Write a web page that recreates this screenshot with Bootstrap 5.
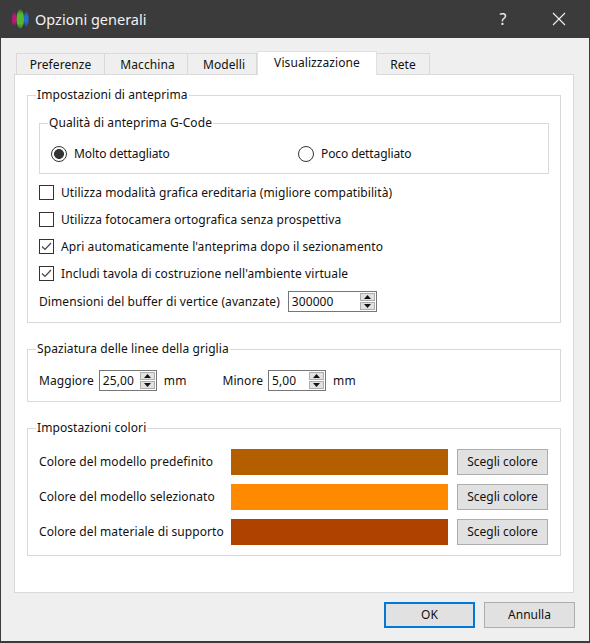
<!DOCTYPE html>
<html lang="it">
<head>
<meta charset="utf-8">
<title>Opzioni generali</title>
<link rel="stylesheet" href="https://cdn.jsdelivr.net/npm/bootstrap@5.3.0/dist/css/bootstrap.min.css">
<style>
html,body{height:100%}
body{background:#efefef;color:#111;font:12px/16px "Noto Sans","Open Sans",sans-serif;letter-spacing:.08px;overflow:hidden}
.shell{width:590px;height:643px;border:1px solid #3b3b3b;border-bottom-width:2px;background:#efefef}
.titlebar{height:37px;background:#3b3b3b;color:#f2f2f2;flex:none;padding:0 7px 2px 10px}
.titlebar .ttl{font-size:14.5px;margin-left:5px;letter-spacing:0}
.tbtn{width:46px;display:flex;align-items:center;justify-content:center}
.tbtn-q{font-size:16px;margin-right:10px}
.tabs-wrap{padding:13px 16px 0 13px;flex:1}
.nav-tabs.wintabs{border:0;padding-left:2px;height:23px;align-items:flex-end;flex-wrap:nowrap;margin:0;position:relative;z-index:2}
.wintabs .nav-link{font-size:12px;color:#111;background:#efefef;border:1px solid #d9d9d9;border-bottom:0;border-left-width:0;border-radius:0;height:21px;padding:3px 0 0;text-align:center;margin:0}
.wintabs .nav-item:first-child .nav-link{border-left-width:1px}
.wintabs .nav-link.active{background:#fff;border-left-width:1px;color:#111;padding-top:3px;margin-bottom:-1px;height:24px}
.tw1{width:89px}.tw2{width:83px}.tw3{width:69px}.tw4{width:120px}.tw5{width:53px}
.tw2 .nav-link{padding-left:3px!important}
.tw3 .nav-link{padding-left:4px!important}
.wintabs .nav-item.tw5 .nav-link{border-left-width:0}
.panel{background:#fff;border:1px solid #d9d9d9;width:560px;height:519px;padding:12px 12px 0}
fieldset.gb{border:1px solid #d9d9d9;padding:0 11px;margin:0}
fieldset.gb>legend{float:none;width:auto;font-size:12px;line-height:16px;margin:0 0 0 -3px;padding:0 1px;color:#111}
.gb1{height:236px}
.gb2{height:61px;margin-top:18px!important}
.gb3{height:136px;margin-top:18px!important}
.gb-in{height:59px;margin-top:12px!important}
.radio-grid{display:grid;grid-template-columns:1fr 1fr;column-gap:8px;padding-top:15px}
.rb{width:16px;height:16px;border:1px solid #333;border-radius:50%;background:#fff;margin:0;flex:none;appearance:none;position:static}
.rb:checked{background:radial-gradient(circle,#333 0 4.6px,#fff 5.3px)}
.rtext{margin-left:7px;letter-spacing:-.1px}
.cks{margin-top:5px}
.ckrow{height:27px;display:flex;align-items:center;padding-left:0;margin:0}
.ckrow .form-check-input{width:15px;height:15px;margin:0 7px 0 0;float:none;border:1px solid #333;border-radius:0;background-color:#fff;box-shadow:none;flex:none}
.ckrow .form-check-input:checked{background-color:#fff;border-color:#333;background-size:15px 15px;background-image:url("data:image/svg+xml,%3Csvg xmlns='http://www.w3.org/2000/svg' viewBox='0 0 15 15'%3E%3Cpath d='M3 7.5l3 3 6-6.500' fill='none' stroke='%23444' stroke-width='1.200'/%3E%3C/svg%3E")}
.ckrow .form-check-label{color:#111}
.spinrow{height:21px;margin-top:4px}
.spin{height:21px;border:1px solid #767676;background:#fff;display:flex;align-items:center;justify-content:space-between;padding:0 1px 0 3px;flex:none;font-size:12px}
.sw89{width:89px;margin-left:8px}
.sw58{width:58px;margin-left:5px}
.arrows{width:15px;height:17px;display:flex;flex-direction:column;gap:1px;flex:none}
.arrows span{flex:1;background:#e1e1e1;border:1px solid #adadad;display:flex;align-items:center;justify-content:center}
.mmlbl{margin-left:7px}
.grid2{height:21px;margin-top:13px}
.gap-mm{width:36px;flex:none}
.colorrow{height:26px;margin-bottom:9px}
.colorlbl{width:192px;flex:none}
.swatch{width:217px;height:26px;flex:none}
.c1{background:#b35f00}.c2{background:#ff8a00}.c3{background:#b04200}
.wbtn{height:26px;background:#e1e1e1;border:1px solid #adadad;border-radius:0;color:#111;font-size:12px;line-height:16px;padding:0;width:91px;flex:none}
.wbtn:hover{background:#e1e1e1;border-color:#adadad;color:#111}
.ml9{margin-left:9px}
.okb{border:2px solid #0078d7}
.okb:hover{border-color:#0078d7}
.foot{height:26px;margin-top:9px;width:561px}
.colors-pad{padding-top:13px}
</style>
</head>
<body>
<div class="shell d-flex flex-column">
  <div class="titlebar d-flex align-items-center">
    <svg width="19" height="20" viewBox="0 0 19 20" aria-hidden="true">
      <defs>
        <linearGradient id="gm" x1="0" x2="0" y1="0" y2="1"><stop offset="0" stop-color="#5a2a4c"/><stop offset=".3" stop-color="#c0147c"/><stop offset=".7" stop-color="#c0147c"/><stop offset="1" stop-color="#5a2a4c"/></linearGradient>
        <linearGradient id="gg" x1="0" x2="0" y1="0" y2="1"><stop offset="0" stop-color="#3e6b3a"/><stop offset=".25" stop-color="#55b52c"/><stop offset=".75" stop-color="#55b52c"/><stop offset="1" stop-color="#3e6b3a"/></linearGradient>
        <linearGradient id="gb" x1="0" x2="0" y1="0" y2="1"><stop offset="0" stop-color="#2f4a6e"/><stop offset=".3" stop-color="#1e6fd0"/><stop offset=".7" stop-color="#1e6fd0"/><stop offset="1" stop-color="#2f4a6e"/></linearGradient>
      </defs>
      <ellipse cx="3.300" cy="10" rx="2.300" ry="7.500" fill="url(#gm)"/>
      <ellipse cx="15.300" cy="10" rx="2.300" ry="7.500" fill="url(#gb)"/>
      <ellipse cx="9.300" cy="10" rx="3.700" ry="9.500" fill="url(#gg)"/>
    </svg>
    <span class="ttl">Opzioni generali</span>
    <span class="tbtn tbtn-q ms-auto">?</span>
    <span class="tbtn">
      <svg width="14" height="14" viewBox="0 0 14 14" aria-hidden="true"><path d="M1 1l12 12M13 1L1 13" stroke="#f2f2f2" stroke-width="1.100" fill="none"/></svg>
    </span>
  </div>
  <div class="tabs-wrap">
    <ul class="nav nav-tabs wintabs">
      <li class="nav-item tw1"><a class="nav-link" href="#">Preferenze</a></li>
      <li class="nav-item tw2"><a class="nav-link" href="#">Macchina</a></li>
      <li class="nav-item tw3"><a class="nav-link" href="#">Modelli</a></li>
      <li class="nav-item tw4"><a class="nav-link active" href="#">Visualizzazione</a></li>
      <li class="nav-item tw5"><a class="nav-link" href="#">Rete</a></li>
    </ul>
    <div class="panel">
      <fieldset class="gb gb1">
        <legend>Impostazioni di anteprima</legend>
        <fieldset class="gb gb-in">
          <legend class="leg2">Qualità di anteprima G-Code</legend>
          <div class="radio-grid">
            <label class="d-flex align-items-center"><input class="rb" type="radio" name="q" checked><span class="rtext">Molto dettagliato</span></label>
            <label class="d-flex align-items-center"><input class="rb" type="radio" name="q"><span class="rtext">Poco dettagliato</span></label>
          </div>
        </fieldset>
        <div class="cks">
          <div class="form-check ckrow"><input class="form-check-input" type="checkbox" id="c1"><label class="form-check-label" for="c1">Utilizza modalità grafica ereditaria (migliore compatibilità)</label></div>
          <div class="form-check ckrow"><input class="form-check-input" type="checkbox" id="c2"><label class="form-check-label" for="c2">Utilizza fotocamera ortografica senza prospettiva</label></div>
          <div class="form-check ckrow"><input class="form-check-input" type="checkbox" id="c3" checked><label class="form-check-label" for="c3">Apri automaticamente l'anteprima dopo il sezionamento</label></div>
          <div class="form-check ckrow"><input class="form-check-input" type="checkbox" id="c4" checked><label class="form-check-label" for="c4">Includi tavola di costruzione nell'ambiente virtuale</label></div>
        </div>
        <div class="d-flex align-items-center spinrow">
          <span>Dimensioni del buffer di vertice (avanzate)</span>
          <div class="spin sw89"><span>300000</span><div class="arrows"><span><svg width="7" height="4"><path d="M3.500 0L7 4H0z" fill="#111"/></svg></span><span><svg width="7" height="4"><path d="M0 0h7L3.500 4z" fill="#111"/></svg></span></div></div>
        </div>
      </fieldset>
      <fieldset class="gb gb2">
        <legend>Spaziatura delle linee della griglia</legend>
        <div class="d-flex align-items-center grid2">
          <span>Maggiore</span>
          <div class="spin sw58"><span>25,00</span><div class="arrows"><span><svg width="7" height="4"><path d="M3.500 0L7 4H0z" fill="#111"/></svg></span><span><svg width="7" height="4"><path d="M0 0h7L3.500 4z" fill="#111"/></svg></span></div></div>
          <span class="mmlbl">mm</span>
          <span class="gap-mm"></span>
          <span>Minore</span>
          <div class="spin sw58"><span>5,00</span><div class="arrows"><span><svg width="7" height="4"><path d="M3.500 0L7 4H0z" fill="#111"/></svg></span><span><svg width="7" height="4"><path d="M0 0h7L3.500 4z" fill="#111"/></svg></span></div></div>
          <span class="mmlbl">mm</span>
        </div>
      </fieldset>
      <fieldset class="gb gb3">
        <legend>Impostazioni colori</legend>
        <div class="colors-pad">
          <div class="d-flex align-items-center colorrow"><span class="colorlbl">Colore del modello predefinito</span><div class="swatch c1"></div><button class="btn wbtn ml9" type="button">Scegli colore</button></div>
          <div class="d-flex align-items-center colorrow"><span class="colorlbl">Colore del modello selezionato</span><div class="swatch c2"></div><button class="btn wbtn ml9" type="button">Scegli colore</button></div>
          <div class="d-flex align-items-center colorrow"><span class="colorlbl">Colore del materiale di supporto</span><div class="swatch c3"></div><button class="btn wbtn ml9" type="button">Scegli colore</button></div>
        </div>
      </fieldset>
    </div>
    <div class="d-flex justify-content-end foot">
      <button class="btn wbtn okb" type="button">OK</button>
      <button class="btn wbtn ml9" type="button">Annulla</button>
    </div>
  </div>
</div>
<script src="https://cdn.jsdelivr.net/npm/bootstrap@5.3.0/dist/js/bootstrap.bundle.min.js"></script>
</body>
</html>
